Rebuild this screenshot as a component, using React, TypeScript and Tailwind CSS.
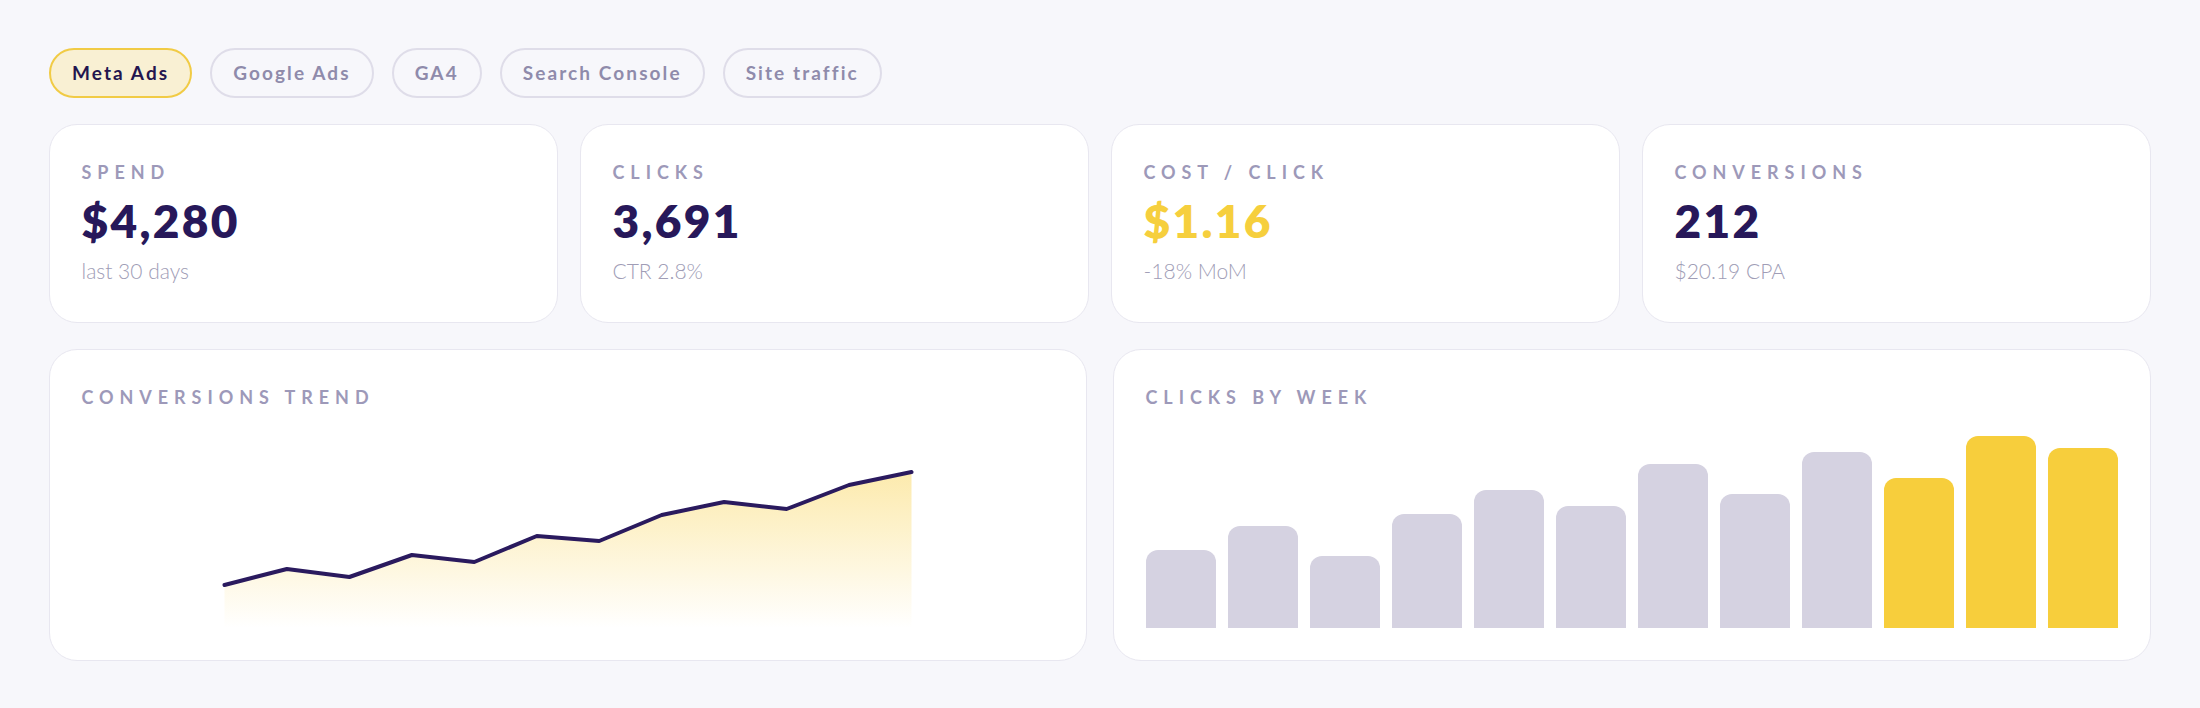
const tabs = ["Meta Ads", "Google Ads", "GA4", "Search Console", "Site traffic"];

const stats = [
  { label: "Spend", value: "$4,280", sub: "last 30 days", accent: false },
  { label: "Clicks", value: "3,691", sub: "CTR 2.8%", accent: false },
  { label: "Cost / Click", value: "$1.16", sub: "-18% MoM", accent: true },
  { label: "Conversions", value: "212", sub: "$20.19 CPA", accent: false },
];

// chart coords in a 970x200 box
const trend = [157, 141, 149, 127, 134, 108, 113, 87, 74, 81, 57, 44];
const weeks = [78, 102, 72, 114, 138, 122, 164, 134, 176, 150, 192, 180];

function Label({ children }: { children: React.ReactNode }) {
  return (
    <div className="text-[18px] leading-[22px] font-bold uppercase tracking-[0.33em] text-[#9d99b9]">
      {children}
    </div>
  );
}

function TrendChart() {
  const x0 = 141;
  const step = 62.45;
  const pts = trend.map((y, i) => `${(x0 + i * step).toFixed(1)},${y}`);
  const last = x0 + (trend.length - 1) * step;
  const area = `M${x0},200 L${pts.join(" L")} L${last.toFixed(1)},200 Z`;
  return (
    <svg viewBox="0 0 970 200" className="mt-[20px] block h-[200px] w-full">
      <defs>
        <linearGradient id="fade" x1="0" y1="0" x2="0" y2="1">
          <stop offset="0%" stopColor="#fad96a" stopOpacity="0.55" />
          <stop offset="100%" stopColor="#fad96a" stopOpacity="0" />
        </linearGradient>
      </defs>
      <path d={area} fill="url(#fade)" />
      <polyline
        points={pts.join(" ")}
        fill="none"
        stroke="#2a1a5e"
        strokeWidth="4"
        strokeLinecap="round"
        strokeLinejoin="round"
      />
    </svg>
  );
}

export default function App() {
  return (
    <div
      className="min-h-screen bg-[#f7f7fb] px-[49px] pt-[48px] pb-[50px]"
      style={{ fontFamily: "Lato, 'Noto Sans', sans-serif" }}
    >
      <div className="flex flex-col gap-[26px]">
        <div className="flex gap-[18px]">
          {tabs.map((t, i) => (
            <button
              key={t}
              className={
                i === 0
                  ? "rounded-full border-2 border-[#f1cb45] bg-[#f9f0d3] px-[21px] py-[12px] text-[19px] leading-[22px] font-bold tracking-[0.11em] text-[#24154f]"
                  : "rounded-full border-2 border-[#dfdde9] px-[21px] py-[12px] text-[19px] leading-[22px] font-bold tracking-[0.11em] text-[#8f8bab]"
              }
            >
              {t}
            </button>
          ))}
        </div>

        <div className="grid grid-cols-4 gap-[22px]">
          {stats.map((s) => (
            <div
              key={s.label}
              className="rounded-[28px] border-[1.5px] border-[#e8e7f0] bg-white px-[31.5px] pt-[36px] pb-[38px]"
            >
              <Label>{s.label}</Label>
              <div
                className={
                  s.accent
                    ? "mt-[12px] text-[46px] leading-[52px] font-extrabold tracking-[0.05em] text-[#f6cf3d]"
                    : "mt-[12px] text-[46px] leading-[52px] font-extrabold tracking-[0.05em] text-[#27185a]"
                }
              >
                {s.value}
              </div>
              <div className="mt-[11px] text-[21px] leading-[26px] font-light text-[#a09db6]">
                {s.sub}
              </div>
            </div>
          ))}
        </div>

        <div className="grid grid-cols-2 gap-[26px]">
          <div className="rounded-[28px] border-[1.5px] border-[#e8e7f0] bg-white px-[31.5px] pt-[36px] pb-[32px]">
            <Label>Conversions trend</Label>
            <TrendChart />
          </div>
          <div className="rounded-[28px] border-[1.5px] border-[#e8e7f0] bg-white px-[31.5px] pt-[36px] pb-[32px]">
            <Label>Clicks by week</Label>
            <div className="mt-[20px] flex h-[200px] items-end gap-[12px]">
              {weeks.map((h, i) => (
                <div
                  key={i}
                  className={
                    i >= 9
                      ? "flex-1 rounded-t-[12px] bg-[#f7ce3c]"
                      : "flex-1 rounded-t-[12px] bg-[#d5d2e1]"
                  }
                  style={{ height: h }}
                />
              ))}
            </div>
          </div>
        </div>
      </div>
    </div>
  );
}
